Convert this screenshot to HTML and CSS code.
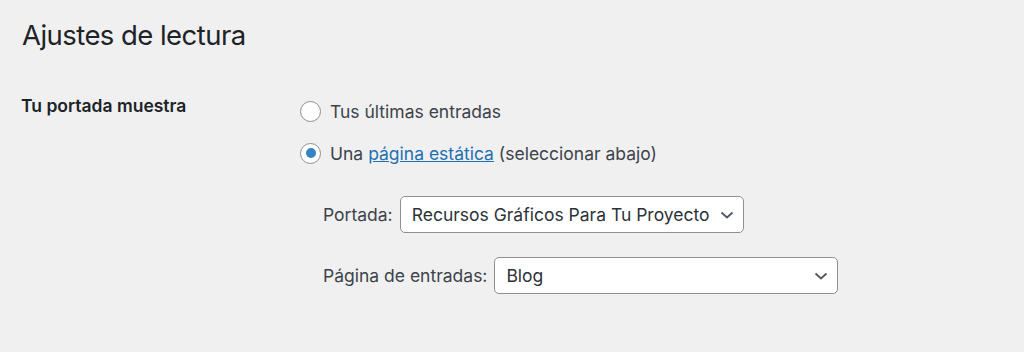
FILE: index.html
```html
<!DOCTYPE html>
<html lang="es">
<head>
<meta charset="utf-8">
<title>Ajustes de lectura</title>
<link rel="stylesheet" href="styles.css">
</head>
<body>
<div class="wrap">
  <h1 class="title">Ajustes de lectura</h1>
  <div class="row">
    <div class="th">Tu portada muestra</div>
    <div class="td">
      <div class="radio"><span class="circle"></span><span>Tus últimas entradas</span></div>
      <div class="radio"><span class="circle checked"></span><span>Una <a class="link" href="#">página estática</a> (seleccionar abajo)</span></div>
      <div class="pages">
        <div class="page-row">
          <span class="plabel">Portada:</span>
          <div class="select sel-front"><span>Recursos Gráficos Para Tu Proyecto</span>
            <svg class="chev" width="14" height="8" viewBox="0 0 14 8"><path d="M1.5 1.5 L7 6.5 L12.5 1.5" fill="none" stroke="#50575e" stroke-width="1.8"/></svg>
          </div>
        </div>
        <div class="page-row">
          <span class="plabel">Página de entradas:</span>
          <div class="select sel-posts"><span>Blog</span>
            <svg class="chev" width="14" height="8" viewBox="0 0 14 8"><path d="M1.5 1.5 L7 6.5 L12.5 1.5" fill="none" stroke="#50575e" stroke-width="1.8"/></svg>
          </div>
        </div>
      </div>
    </div>
  </div>
</div>
</body>
</html>
```

FILE: styles.css
```css
html, body {
  margin: 0;
  padding: 0;
  background: #f0f0f1;
}
body {
  font-family: Inter, "Noto Sans", "Liberation Sans", sans-serif;
  font-size: 17.5px;
  color: #3c434a;
}
.wrap {
  padding: 0 0 0 21px;
}
.title {
  margin: 0;
  padding: 17px 0 0 1px;
  font-size: 27.5px;
  font-weight: 400;
  letter-spacing: -0.55px;
  line-height: 36px;
  color: #1d2327;
}
.row {
  display: flex;
  align-items: flex-start;
  margin-top: 41px;
}
.th {
  width: 279px;
  flex: none;
  font-weight: 600;
  color: #1d2327;
  line-height: 24px;
}
.td {
  display: flex;
  flex-direction: column;
  padding-top: 6px;
}
.radio {
  display: flex;
  align-items: center;
  gap: 9px;
  height: 22px;
  margin-bottom: 20px;
}
.circle {
  width: 19px;
  height: 19px;
  border: 1px solid #8c8f94;
  border-radius: 50%;
  background: #fff;
  flex: none;
  position: relative;
}
.circle.checked::after {
  content: "";
  position: absolute;
  left: 4.5px;
  top: 4.5px;
  width: 10px;
  height: 10px;
  border-radius: 50%;
  background: #3582c4;
}
.link {
  color: #2271b1;
  text-decoration: underline;
}
.pages {
  display: flex;
  flex-direction: column;
  gap: 24px;
  padding: 12px 0 0 23px;
}
.page-row {
  display: flex;
  align-items: center;
  gap: 7px;
}
.select {
  display: flex;
  align-items: center;
  justify-content: space-between;
  box-sizing: border-box;
  height: 37px;
  border: 1px solid #8c8f94;
  border-radius: 5px;
  background: #fff;
  padding: 0 9px 0 11px;
  color: #2c3338;
}
.sel-front { width: 344px; }
.sel-posts { width: 344px; }
.chev { flex: none; }
```
